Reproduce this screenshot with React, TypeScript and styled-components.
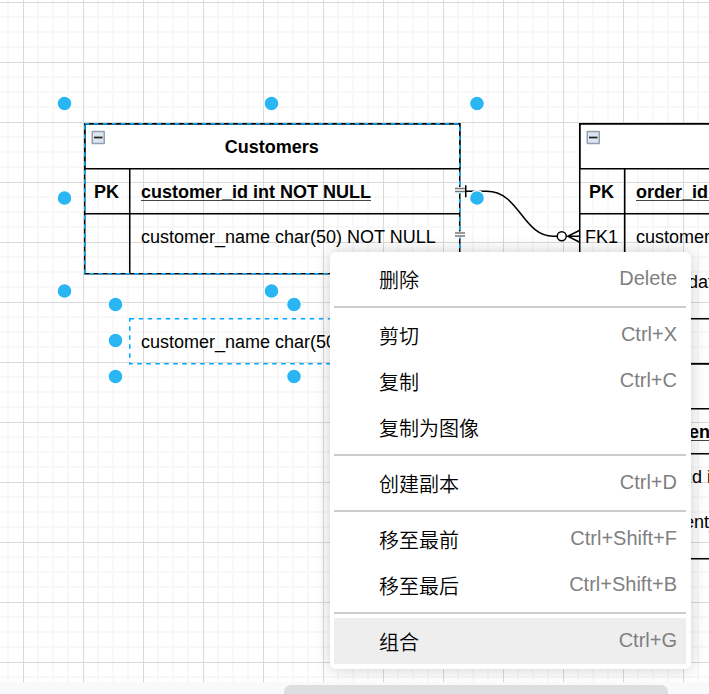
import React from "react";
import styled, { createGlobalStyle } from "styled-components";

const GlobalStyle = createGlobalStyle`
  * { box-sizing: border-box; }
  body { margin: 0; overflow: hidden; font-family: "Liberation Sans", Arial, "Noto Sans CJK SC", sans-serif; }
`;

const Editor = styled.div`
  display: flex;
  flex-direction: column;
  width: 709px;
  height: 694px;
  overflow: hidden;
  background: #fff;
`;

const Canvas = styled.main`
  position: relative;
  flex: 0 0 682px;
  overflow: hidden;
  background: #fff;
`;

const Drawing = styled.svg`
  position: absolute;
  inset: 0;
  display: block;
`;

const ScrollTrack = styled.div`
  flex: 0 0 12px;
  height: 12px;
  padding: 3px 41px 0 284px;
  overflow: hidden;
  background: #f8f9fb;
`;

const ScrollThumb = styled.div`
  height: 18px;
  border-radius: 7px;
  background: #dcdee0;
`;

const EntityBox = styled.section<{ $x: number; $y: number }>`
  position: absolute;
  left: ${(p) => p.$x}px;
  top: ${(p) => p.$y}px;
  width: 375px;
  font-size: 18px;
  line-height: 22px;
  color: #000;
`;

const EntityTitle = styled.header`
  display: flex;
  align-items: center;
  justify-content: center;
  height: 45px;
  padding: 2px 1px 0 0;
  font-weight: bold;
`;

const EntityRow = styled.div<{ $key?: boolean }>`
  display: grid;
  grid-template-columns: 45px 1fr;
  align-items: center;
  height: 45px;
  padding-top: 2px;
  white-space: nowrap;
  font-weight: ${(p) => (p.$key ? "bold" : "normal")};
`;

const KeyCell = styled.span`
  padding-right: 1.5px;
  text-align: center;
`;

const FieldCell = styled.span<{ $underline?: boolean }>`
  padding-left: 11.25px;
  text-decoration: ${(p) => (p.$underline ? "underline" : "none")};
  text-decoration-thickness: 1px;
  text-decoration-color: #444;
  text-decoration-skip-ink: none;
  text-underline-offset: 2px;
`;

const Menu = styled.nav`
  position: absolute;
  left: 330px;
  top: 252px;
  width: 361px;
  padding: 4px 5px 5px 4px;
  border-radius: 6px;
  background: #fff;
  box-shadow: 0 0 16px rgba(0, 0, 0, 0.2);
`;

const MenuItem = styled.div<{ $active?: boolean }>`
  display: flex;
  align-items: center;
  justify-content: space-between;
  height: 46px;
  padding: 0 9px 0 45px;
  font-size: 20px;
  background: ${(p) => (p.$active ? "#eee" : "transparent")};
`;

const MenuLabel = styled.span`
  padding-top: 2px;
  font-family: "Noto Sans CJK SC", sans-serif;
  font-weight: 350;
  line-height: 28px;
  color: #000;
`;

const Shortcut = styled.span`
  line-height: 24px;
  padding-bottom: 2px;
  color: #808080;
`;

const Separator = styled.hr`
  height: 2px;
  margin: 4px 0;
  border: 0;
  background: #ccc;
`;

type Field = { tag?: string; text: string; primary?: boolean };
type EntityData = { x: number; y: number; title: string; fields: Field[] };

const entities: EntityData[] = [
  {
    x: 84.75,
    y: 123.75,
    title: "Customers",
    fields: [
      { tag: "PK", text: "customer_id int NOT NULL", primary: true },
      { text: "customer_name char(50) NOT NULL" },
    ],
  },
  {
    x: 579.75,
    y: 123.75,
    title: "Orders",
    fields: [
      { tag: "PK", text: "order_id int NOT NULL", primary: true },
      { tag: "FK1", text: "customer_id int NOT NULL" },
      { text: "order_date date NOT NULL" },
    ],
  },
  {
    x: 579.75,
    y: 363.75,
    title: "Shipments",
    fields: [
      { tag: "PK", text: "shipment_id int NOT NULL", primary: true },
      { tag: "FK1", text: "order_id int NOT NULL" },
      { text: "shipment_date date NOT NULL" },
    ],
  },
];

const menuGroups: { label: string; keys?: string; active?: boolean }[][] = [
  [{ label: "删除", keys: "Delete" }],
  [{ label: "剪切", keys: "Ctrl+X" }, { label: "复制", keys: "Ctrl+C" }, { label: "复制为图像" }],
  [{ label: "创建副本", keys: "Ctrl+D" }],
  [{ label: "移至最前", keys: "Ctrl+Shift+F" }, { label: "移至最后", keys: "Ctrl+Shift+B" }],
  [{ label: "组合", keys: "Ctrl+G", active: true }],
];

const handles = [
  [64.5, 103.5], [271.5, 103.5], [477, 103.5],
  [64.5, 198], [477, 198],
  [64.5, 291], [271.5, 291],
  [115.5, 304.5], [294, 304.5],
  [115.5, 340.5],
  [115.5, 376.5], [294, 376.5],
];

function GridPattern() {
  return (
    <>
      <defs>
        <pattern id="grid" x="23" y="2" width="60" height="60" patternUnits="userSpaceOnUse">
          <path d="M15 0V60M30 0V60M45 0V60M0 15H60M0 30H60M0 45H60" stroke="#f8f8f8" strokeWidth="2" />
          <path d="M.5 0V60M0 .5H60" stroke="#d9d9d9" strokeWidth="1" />
        </pattern>
      </defs>
      <rect width="709" height="682" fill="url(#grid)" />
    </>
  );
}

function EntityOutline({ x, y, fields }: EntityData) {
  const height = 45 + fields.length * 45 + 15;
  return (
    <g stroke="#000" strokeWidth="1.5" fill="none">
      <rect x={x} y={y} width="375" height="45" fill="#fff" />
      <rect x={x} y={y} width="375" height={height} />
      <path d={`M${x} ${y + 90}h375M${x + 45} ${y + 45}V${y + height}`} />
      <g stroke="none">
        <rect x={x + 6.75} y={y + 7} width="13.5" height="13.5" rx="1" fill="#91a1b3" />
        <rect x={x + 8.25} y={y + 8.5} width="10.5" height="10.5" fill="#dde5ee" />
        <rect x={x + 9.25} y={y + 12.9} width="8.5" height="1.7" fill="#222" />
      </g>
    </g>
  );
}

function MoveGrip({ y }: { y: number }) {
  return (
    <g>
      <rect x="455" y={y - 3} width="10" height="6" fill="#fff" />
      <path d={`M455 ${y - 1.5}h10M455 ${y + 1.5}h10`} stroke="#777" strokeWidth="1.4" />
    </g>
  );
}

function Diagram() {
  return (
    <Drawing width="709" height="682" viewBox="0 0 709 682">
      <GridPattern />
      {entities.map((e) => <EntityOutline key={e.title} {...e} />)}
      <g fill="none" stroke="#000" strokeWidth="1.5">
        <path d="M459.75 191.25H487C519 191.25 523 236.25 553 236.25H557.5" />
        <path d="M465.75 185.25v12M579.75 230.25l-12 6l12 6M567.75 236.25h12" />
        <circle cx="561.75" cy="236.25" r="4.5" fill="#fff" />
      </g>
      <g fill="none" stroke="#00a8ff" strokeWidth="1.5" strokeDasharray="4.5 4.5">
        <rect x="84.75" y="123.75" width="375" height="150" />
        <rect x="129.75" y="318.75" width="330" height="45" />
      </g>
      <MoveGrip y={190} />
      <MoveGrip y={234.5} />
      {handles.map(([cx, cy]) => (
        <circle key={`${cx}-${cy}`} cx={cx} cy={cy} r="7.4" fill="#29b6f2" stroke="#fff" strokeWidth="1.2" />
      ))}
    </Drawing>
  );
}

function Entity({ x, y, title, fields }: EntityData) {
  return (
    <EntityBox $x={x} $y={y}>
      <EntityTitle>{title}</EntityTitle>
      {fields.map((f) => (
        <EntityRow key={f.text} $key={f.primary}>
          <KeyCell>{f.tag}</KeyCell>
          <FieldCell $underline={f.primary}>{f.text}</FieldCell>
        </EntityRow>
      ))}
    </EntityBox>
  );
}

function ContextMenu() {
  return (
    <Menu>
      {menuGroups.map((group, i) => (
        <React.Fragment key={i}>
          {i > 0 && <Separator />}
          {group.map((item) => (
            <MenuItem key={item.label} $active={item.active}>
              <MenuLabel>{item.label}</MenuLabel>
              {item.keys && <Shortcut>{item.keys}</Shortcut>}
            </MenuItem>
          ))}
        </React.Fragment>
      ))}
    </Menu>
  );
}

export default function App() {
  return (
    <Editor>
      <GlobalStyle />
      <Canvas>
        <Diagram />
        {entities.map((e) => <Entity key={e.title} {...e} />)}
        <EntityBox $x={84.75} $y={318.75}>
          <EntityRow>
            <KeyCell />
            <FieldCell>customer_name char(50) NOT NULL</FieldCell>
          </EntityRow>
        </EntityBox>
        <ContextMenu />
      </Canvas>
      <ScrollTrack>
        <ScrollThumb />
      </ScrollTrack>
    </Editor>
  );
}
